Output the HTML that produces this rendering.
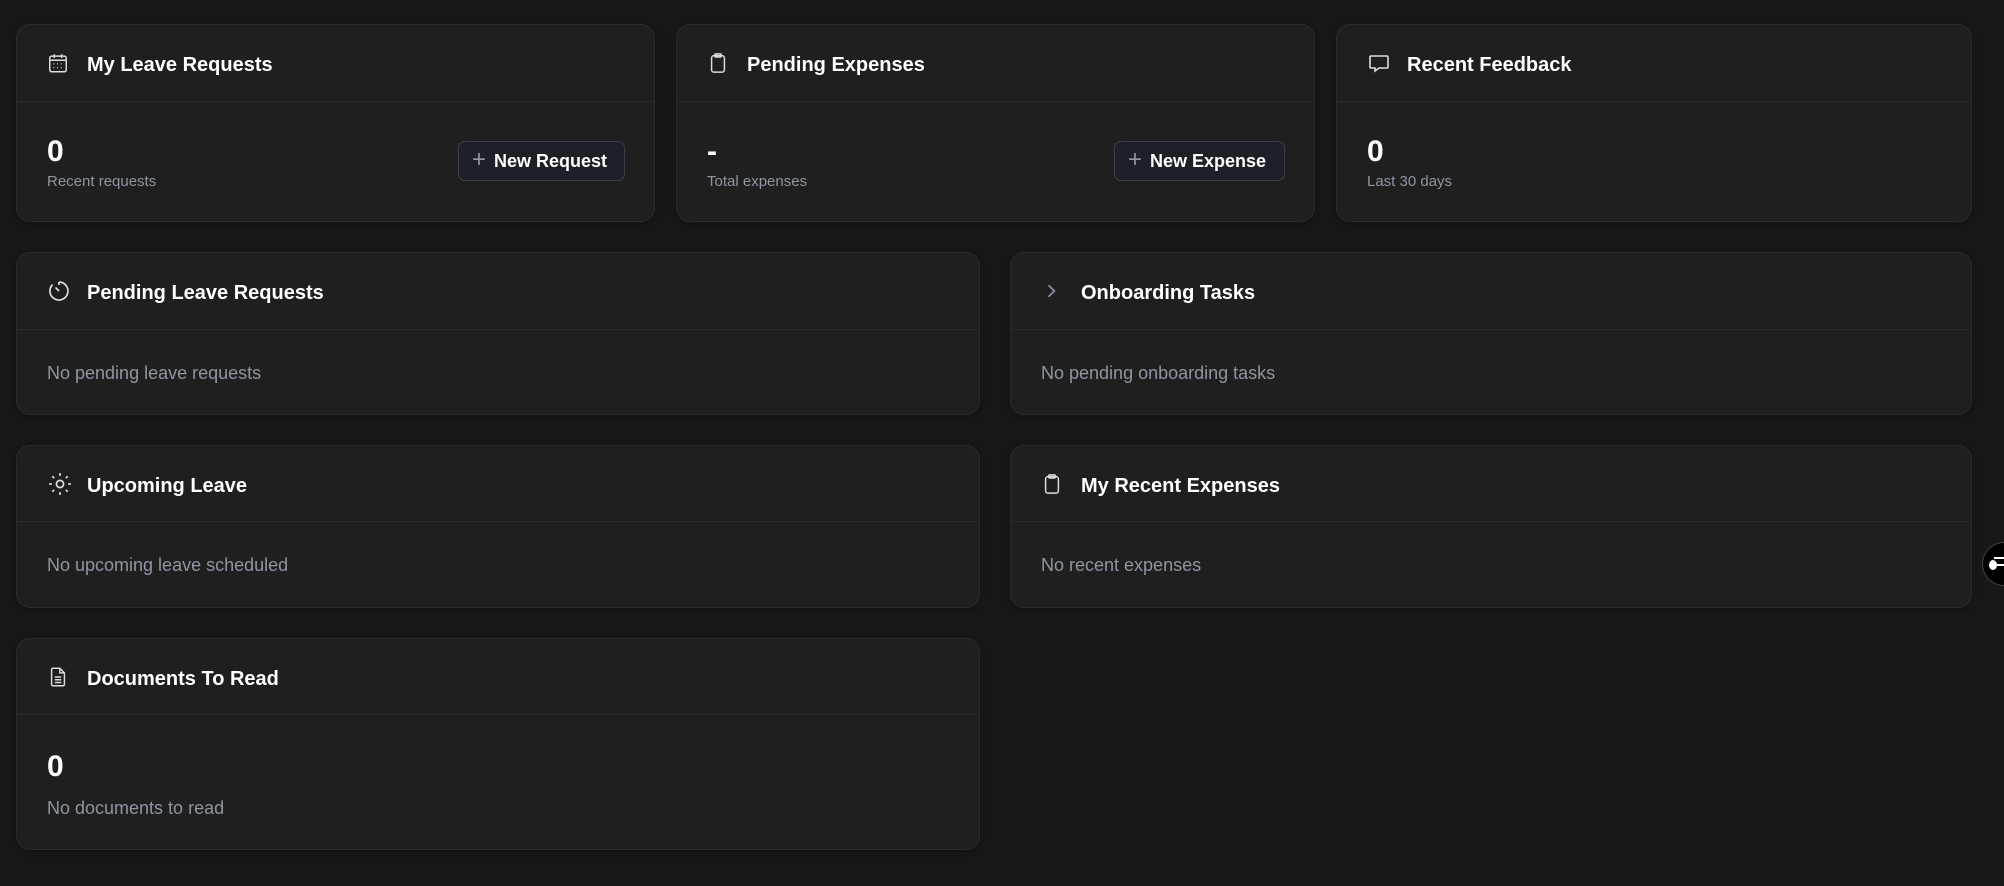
<!DOCTYPE html>
<html><head><style>
*{box-sizing:border-box;margin:0;padding:0}
body{width:2004px;height:886px;background:#171717;font-family:"Liberation Sans",sans-serif;position:relative;overflow:hidden;color:#fff}
.card{position:absolute;background:#1f1f1f;border:1px solid #2b2b2b;border-radius:14px;box-shadow:0 2px 6px rgba(0,0,0,.25)}
.hd{position:absolute;left:0;right:0;top:0;border-bottom:1px solid #2b2b2b}
.hd svg{position:absolute;left:30px;top:50%;transform:translateY(-50%)}
.hd .t{position:absolute;left:70px;top:50%;transform:translateY(-40%);font-size:20px;font-weight:bold;white-space:nowrap}
.muted{position:absolute;left:30px;color:#8e96a3;font-size:18px;white-space:nowrap}
.num{position:absolute;left:30px;font-size:30px;font-weight:bold}
.sm{position:absolute;left:30px;color:#8e96a3;font-size:15px}
.btn{position:absolute;height:40px;border:1px solid #3a404b;border-radius:7px;background:#1d2027;font-size:18px;font-weight:bold;display:flex;align-items:center;padding:0 13px;gap:8px;white-space:nowrap}
.btn span{color:#8e96a3;font-weight:normal;font-size:24px;line-height:1;margin-top:-2px}
</style></head><body>

<div class="card" style="left:16px;top:24px;width:639px;height:198px">
 <div class="hd" style="height:77px">
  <svg width="22" height="22" viewBox="0 0 24 24" fill="none" stroke="#ddd" stroke-width="1.6"><rect x="3" y="4.5" width="18" height="17" rx="2"/><path d="M3 9h18M8 2.5v4M16 2.5v4"/><path d="M7 13h1M11 13h1M15 13h1M7 17h1M11 17h1M15 17h1" stroke-width="1.4"/></svg>
  <div class="t">My Leave Requests</div></div>
 <div class="num" style="top:110px">0</div>
 <div class="sm" style="top:148px">Recent requests</div>
 <div class="btn" style="left:441px;top:116px;width:167px"><span>+</span>New Request</div>
</div>

<div class="card" style="left:676px;top:24px;width:639px;height:198px">
 <div class="hd" style="height:77px">
  <svg width="22" height="24" viewBox="0 0 24 24" fill="none" stroke="#ddd" stroke-width="1.6"><rect x="5" y="4" width="14" height="18" rx="2.5"/><rect x="8.5" y="2" width="7" height="3.5" rx="1"/></svg>
  <div class="t">Pending Expenses</div></div>
 <div class="num" style="top:110px">-</div>
 <div class="sm" style="top:148px">Total expenses</div>
 <div class="btn" style="left:437px;top:116px;width:171px"><span>+</span>New Expense</div>
</div>

<div class="card" style="left:1336px;top:24px;width:636px;height:198px">
 <div class="hd" style="height:77px">
  <svg width="24" height="24" viewBox="0 0 24 24" fill="none" stroke="#ddd" stroke-width="1.6"><path d="M4 5h16a1 1 0 0 1 1 1v10a1 1 0 0 1-1 1h-8l-4 3v-3H4a1 1 0 0 1-1-1V6a1 1 0 0 1 1-1z"/></svg>
  <div class="t">Recent Feedback</div></div>
 <div class="num" style="top:110px">0</div>
 <div class="sm" style="top:148px">Last 30 days</div>
</div>

<div class="card" style="left:16px;top:252px;width:964px;height:163px">
 <div class="hd" style="height:77px">
  <svg width="24" height="24" viewBox="0 0 24 24" fill="none" stroke="#ddd" stroke-width="1.7"><path d="M12 3a9 9 0 1 1-6.4 2.6"/><path d="M12 3v3M8.5 8.5l3.5 3.5"/></svg>
  <div class="t">Pending Leave Requests</div></div>
 <div class="muted" style="top:110px">No pending leave requests</div>
</div>

<div class="card" style="left:1010px;top:252px;width:962px;height:163px">
 <div class="hd" style="height:77px">
  <svg width="20" height="20" viewBox="0 0 24 24" fill="none" stroke="#8e96a3" stroke-width="2"><path d="M9 5l7 7-7 7"/></svg>
  <div class="t">Onboarding Tasks</div></div>
 <div class="muted" style="top:110px">No pending onboarding tasks</div>
</div>

<div class="card" style="left:16px;top:445px;width:964px;height:163px">
 <div class="hd" style="height:76px">
  <svg width="26" height="26" viewBox="0 0 24 24" fill="none" stroke="#ddd" stroke-width="1.6"><circle cx="12" cy="12" r="3.3"/><path d="M12 2v2.5M12 19.5V22M2 12h2.5M19.5 12H22M4.9 4.9l1.7 1.7M17.4 17.4l1.7 1.7M4.9 19.1l1.7-1.7M17.4 6.6l1.7-1.7"/></svg>
  <div class="t">Upcoming Leave</div></div>
 <div class="muted" style="top:109px">No upcoming leave scheduled</div>
</div>

<div class="card" style="left:1010px;top:445px;width:962px;height:163px">
 <div class="hd" style="height:76px">
  <svg width="22" height="24" viewBox="0 0 24 24" fill="none" stroke="#ddd" stroke-width="1.6"><rect x="5" y="4" width="14" height="18" rx="2.5"/><rect x="8.5" y="2" width="7" height="3.5" rx="1"/></svg>
  <div class="t">My Recent Expenses</div></div>
 <div class="muted" style="top:109px">No recent expenses</div>
</div>

<div class="card" style="left:16px;top:638px;width:964px;height:212px">
 <div class="hd" style="height:76px">
  <svg width="22" height="24" viewBox="0 0 24 24" fill="none" stroke="#ddd" stroke-width="1.6"><path d="M6 2.5h8l5 5V20a1.5 1.5 0 0 1-1.5 1.5h-11A1.5 1.5 0 0 1 5 20V4a1.5 1.5 0 0 1 1-1.5z"/><path d="M14 2.5V7.5h5M8.5 12h7M8.5 15h7M8.5 18h7"/></svg>
  <div class="t">Documents To Read</div></div>
 <div class="num" style="top:111px">0</div>
 <div class="muted" style="top:159px">No documents to read</div>
</div>

<div style="position:absolute;left:1982px;top:542px;width:44px;height:44px;border-radius:50%;background:#000;border:1px solid #444"></div>
<div style="position:absolute;left:1989px;top:560px;width:8px;height:10px;border-radius:50%;background:#fff"></div>
<div style="position:absolute;left:1994px;top:557px;width:10px;height:2px;background:#fff"></div>
<div style="position:absolute;left:1997px;top:564px;width:7px;height:2px;background:#fff"></div>
</body></html>
